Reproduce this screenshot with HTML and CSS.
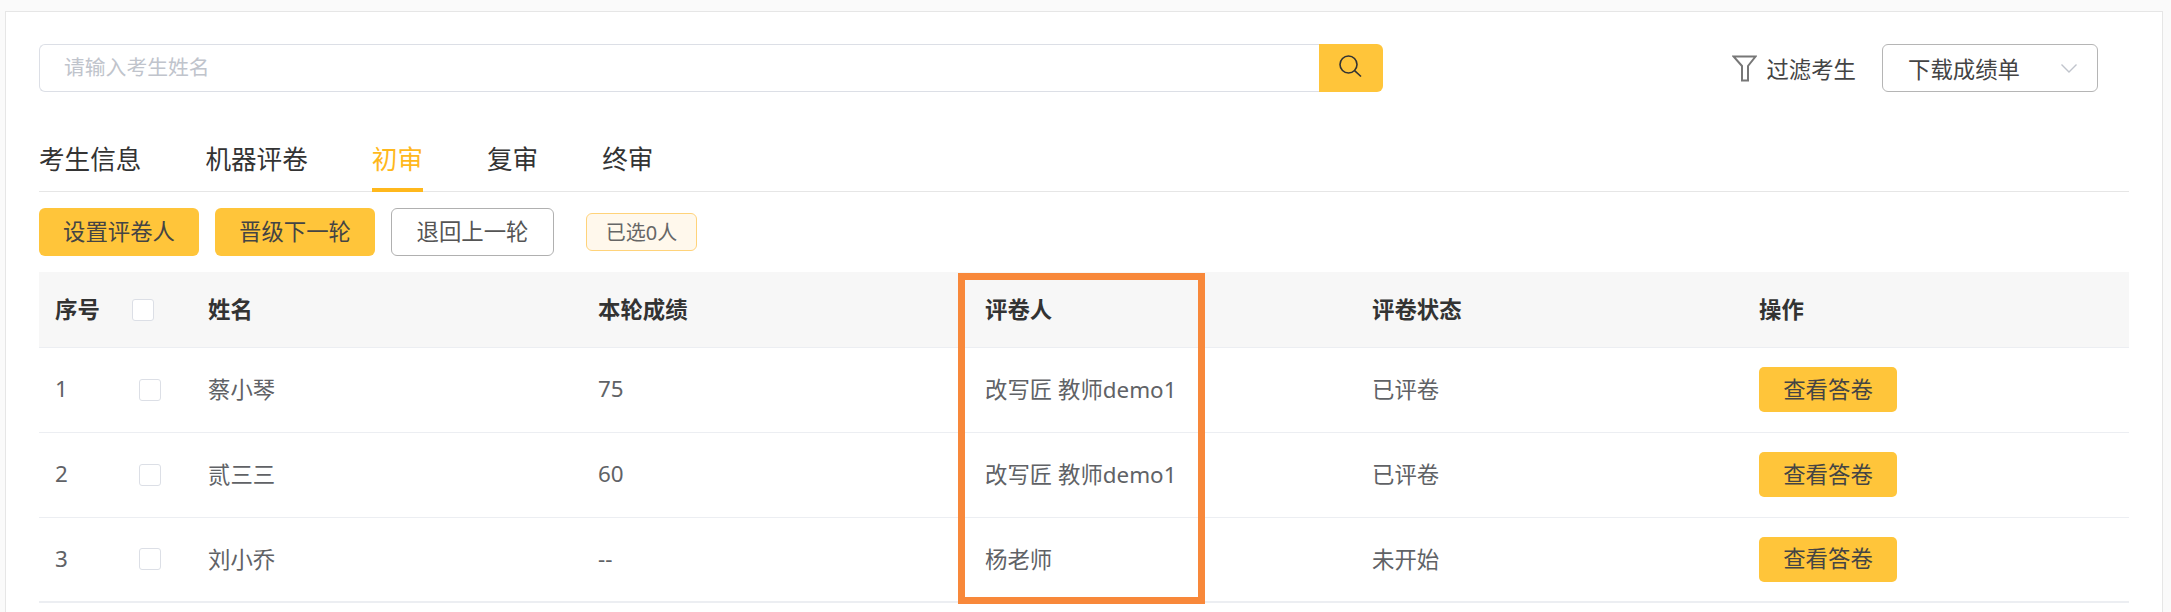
FILE: index.html
```html
<!DOCTYPE html>
<html lang="zh-CN">
<head>
    <meta charset="UTF-8">
    <meta name="viewport" content="width=device-width, initial-scale=1.0">
    <title>初审</title>
    <link rel="stylesheet" href="styles.css">
</head>
<body>

<div class="card">
    <div class="toolbar">
        <div class="search">
            <input class="search-input" type="text" placeholder="请输入考生姓名">
            <button class="search-btn">
                <svg width="24" height="24" viewBox="0 0 24 24" fill="none" stroke="#333" stroke-width="1.6">
                    <circle cx="9.5" cy="9.5" r="8.5"/>
                    <path d="M15.6 15.6 L22 21.5"/>
                </svg>
            </button>
        </div>
        <div class="filter">
            <svg width="25" height="27" viewBox="0 0 25 27" fill="none" stroke="#777" stroke-width="2">
                <path d="M1.5 1.5 H23.5 L16 11 V25.5 H10 V11 Z"/>
            </svg>
            <span>过滤考生</span>
        </div>
        <div class="select">
            <span>下载成绩单</span>
            <svg width="16" height="9" viewBox="0 0 16 9" fill="none" stroke="#c0c4cc" stroke-width="1.4">
                <path d="M0.5 0.5 L8 8 L15.5 0.5"/>
            </svg>
        </div>
    </div>

    <div class="tabs">
        <div class="tab">考生信息</div>
        <div class="tab">机器评卷</div>
        <div class="tab active">初审</div>
        <div class="tab">复审</div>
        <div class="tab">终审</div>
    </div>

    <div class="actions">
        <button class="btn btn-primary">设置评卷人</button>
        <button class="btn btn-primary">晋级下一轮</button>
        <button class="btn btn-plain">退回上一轮</button>
        <span class="tag">已选0人</span>
    </div>

    <div class="table-wrap">
        <table class="table">
            <colgroup>
                <col class="col-no">
                <col class="col-check">
                <col class="col-name">
                <col class="col-wide">
                <col class="col-wide">
                <col class="col-wide">
                <col>
            </colgroup>
            <thead>
                <tr>
                    <th>序号</th>
                    <th class="head-check"><span class="checkbox"></span></th>
                    <th>姓名</th>
                    <th>本轮成绩</th>
                    <th>评卷人</th>
                    <th>评卷状态</th>
                    <th>操作</th>
                </tr>
            </thead>
            <tbody>
                <tr>
                    <td>1</td>
                    <td class="cell-box"><span class="checkbox"></span></td>
                    <td>蔡小琴</td>
                    <td>75</td>
                    <td>改写匠 教师demo1</td>
                    <td>已评卷</td>
                    <td class="cell-box"><button class="btn-view">查看答卷</button></td>
                </tr>
                <tr>
                    <td>2</td>
                    <td class="cell-box"><span class="checkbox"></span></td>
                    <td>贰三三</td>
                    <td>60</td>
                    <td>改写匠 教师demo1</td>
                    <td>已评卷</td>
                    <td class="cell-box"><button class="btn-view">查看答卷</button></td>
                </tr>
                <tr>
                    <td>3</td>
                    <td class="cell-box"><span class="checkbox"></span></td>
                    <td>刘小乔</td>
                    <td>--</td>
                    <td>杨老师</td>
                    <td>未开始</td>
                    <td class="cell-box"><button class="btn-view">查看答卷</button></td>
                </tr>
            </tbody>
        </table>
        <!-- Orange marker drawn over the reviewer column -->
        <div class="marker"></div>
    </div>
</div>

</body>
</html>
```

FILE: styles.css
```css
* {
    box-sizing: border-box;
}

html, body {
    margin: 0;
    padding: 0;
    height: 100%;
    background-color: #fafafa;
    font-family: "Noto Sans", "Noto Sans CJK SC", sans-serif;
    overflow: hidden;
}

button {
    font-family: inherit;
    cursor: pointer;
}

.card {
    margin: 11px 8px 0 5px;
    height: 620px;
    padding: 32px 33px 0 33px;
    background: #fff;
    border: 1px solid #e6e6e6;
}

.toolbar {
    display: flex;
    align-items: center;
    height: 48px;
}

.search {
    display: flex;
    width: 1344px;
    height: 48px;
}

.search-input {
    flex: 1;
    min-width: 0;
    height: 48px;
    padding: 0 24px 2px;
    border: 1px solid #dcdfe6;
    border-right: none;
    border-radius: 6px 0 0 6px;
    outline: none;
    font-family: inherit;
    font-size: 20.8px;
}

.search-input::placeholder {
    color: #c0c4cc;
}

.search-btn {
    display: flex;
    align-items: center;
    justify-content: center;
    width: 64px;
    height: 48px;
    padding: 0 0 2px;
    background: #ffc53a;
    border: none;
    border-radius: 0 6px 6px 0;
}

.filter {
    display: flex;
    align-items: center;
    gap: 9px;
    margin-left: auto;
    font-size: 22.4px;
    color: #444;
}

.select {
    display: flex;
    align-items: center;
    justify-content: space-between;
    width: 216px;
    height: 48px;
    margin: 0 31px 0 26px;
    padding: 0 20px 0 25px;
    border: 1px solid #b5b5b5;
    border-radius: 6px;
    font-size: 22.4px;
    color: #444;
}

.tabs {
    display: flex;
    gap: 64px;
    height: 100px;
    padding-top: 51px;
    border-bottom: 1px solid #e6e6e6;
}

.tab {
    height: 49px;
    font-size: 25.6px;
    line-height: 34px;
    color: #333;
}

.tab.active {
    color: #ffb81c;
    border-bottom: 4px solid #ffb81c;
}

.actions {
    display: flex;
    align-items: center;
    margin-top: 16px;
    height: 48px;
}

.btn {
    width: 160px;
    height: 48px;
    margin-right: 16px;
    padding: 0 0 3px;
    font-size: 22.4px;
    border-radius: 6px;
}

.btn-primary {
    background: #ffc53a;
    border: none;
    color: #444;
}

.btn-plain {
    width: 163px;
    background: #fff;
    border: 1px solid #b0b0b0;
    color: #555;
}

.tag {
    display: flex;
    align-items: center;
    justify-content: center;
    width: 111px;
    height: 38px;
    margin-left: 16px;
    padding-bottom: 2px;
    background: #fff8ec;
    border: 1px solid #ffd37a;
    border-radius: 6px;
    font-size: 20px;
    color: #666;
}

.table-wrap {
    position: relative;
    margin-top: 16px;
}

.table {
    width: 2090px;
    border-collapse: collapse;
    table-layout: fixed;
}

.col-no {
    width: 84px;
}

.col-check {
    width: 69px;
}

.col-name {
    width: 390px;
}

.col-wide {
    width: 387px;
}

.table th, .table td {
    padding: 0 0 0 16px;
    text-align: left;
    font-size: 22.4px;
}

.table th {
    height: 75px;
    padding-bottom: 1px;
    background: #f7f7f7;
    font-weight: 700;
    color: #333;
    border-bottom: 1px solid #eceef2;
}

.table td {
    height: 85px;
    padding-bottom: 2px;
    color: #606266;
    border-bottom: 1px solid #eceef2;
}

.table tbody tr:last-child td {
    border-bottom: 2px solid #eceef2;
}

.table th.head-check {
    padding: 2px 0 0 9px;
}

.table td.cell-box {
    padding-bottom: 0;
}

.checkbox {
    display: block;
    width: 22px;
    height: 22px;
    background: #fff;
    border: 1px solid #dcdfe6;
    border-radius: 3px;
}

.btn-view {
    display: block;
    width: 138px;
    height: 45px;
    padding: 0 0 3px;
    background: #ffc53a;
    border: none;
    border-radius: 5px;
    font-size: 22.4px;
    color: #444;
}

.marker {
    position: absolute;
    top: 1px;
    left: 919px;
    width: 247px;
    height: 331px;
    border-style: solid;
    border-color: #f8883a;
    border-width: 7px;
    pointer-events: none;
}
```
